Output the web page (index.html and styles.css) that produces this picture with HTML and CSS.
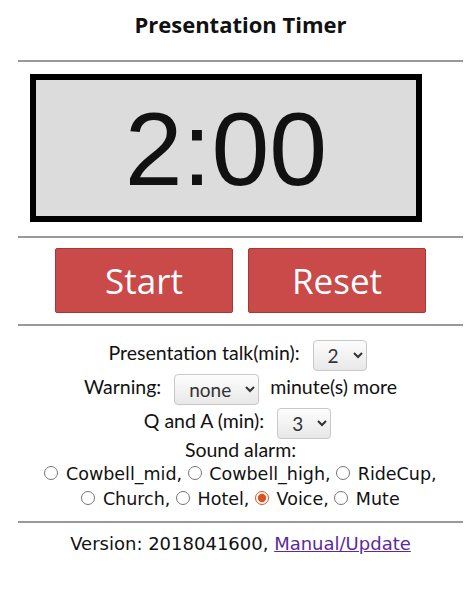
FILE: index.html
```html
<html>
<head>
<title>Presentation Timer</title>
<link rel="stylesheet" href="styles.css">
</head>
<body>
<div class="page">
<h1 class="title">Presentation Timer</h1>
<hr>
<div class="clock">2:00</div>
<hr>
<div class="buttons">
<a href="#" class="btn">Start</a>
<a href="#" class="btn">Reset</a>
</div>
<hr>
<form class="settings" name="setting">
<p class="row">Presentation talk(min):
<select name="talk"><option>1</option><option selected>2</option><option>3</option><option>5</option></select></p>
<p class="row">Warning:
<select name="warn"><option selected>none</option><option>1</option><option>2</option></select>
minute(s) more</p>
<p class="row">Q and A (min):
<select name="qa"><option>2</option><option selected>3</option><option>5</option></select></p>
<p class="label">Sound alarm:</p>
<p class="sounds">
<label><input type="radio" name="snd"> Cowbell_mid,</label>
<label><input type="radio" name="snd"> Cowbell_high,</label>
<label><input type="radio" name="snd"> RideCup,</label><br>
<label><input type="radio" name="snd"> Church,</label>
<label><input type="radio" name="snd"> Hotel,</label>
<label><input type="radio" name="snd" checked> Voice,</label>
<label><input type="radio" name="snd"> Mute</label>
</p>
</form>
<hr>
<p class="version">Version: 2018041600, <a href="#">Manual/Update</a></p>
</div>
</body>
</html>
```

FILE: styles.css
```css
body{margin:0;
color:#111;
text-align:center;}
.page{width:445px;
margin-left:18px;}
.title{font-family:"Open Sans",sans-serif;
font-size:22px;
font-weight:700;
margin:0;
padding-top:9px;
height:43px;}
hr{border:none;
border-top:2px solid #999;
margin:8px 0 0 0;}
.clock{width:380px;
height:136px;
margin:12px 0 14px 12px;
background:#dcdcdc;
border:6px solid #000;
font-family:"Liberation Sans",Arial,sans-serif;
font-size:104px;
line-height:138px;}
.buttons{display:flex;
justify-content:flex-end;
gap:15px;
padding:10px 37px 3px 0;}
.btn{display:block;
width:176px;
height:63px;
line-height:64px;
background:#c94a48;
border:1px solid #a43836;
border-radius:2px;
color:#fff;
font-family:"Open Sans",sans-serif;
font-size:35px;
text-decoration:none;}
.settings{margin:0;
padding-top:10px;
font-family:Lato,sans-serif;
font-size:19.5px;}
.row{margin:0;
height:34px;
line-height:34px;}
select{font-family:Lato,sans-serif;
font-size:19px;
color:#333;
height:31px;
padding:0 10px;
margin-left:8px;
margin-right:6px;
vertical-align:middle;
border:1px solid #c8c8c8;
border-radius:4px;
background:linear-gradient(#fdfdfd,#e8e8e8);}
.label{margin:0;
line-height:24px;}
.sounds{margin:0 0 9px 0;
font-family:"DejaVu Sans",sans-serif;
font-size:17.5px;
line-height:25px;}
input[type=radio]{width:14px;
height:14px;
margin:0 2px 0 0;
accent-color:#d9541e;}
.version{margin:10px 0 0 0;
font-family:"DejaVu Sans",sans-serif;
font-size:18px;
line-height:22px;}
.version a{color:#5b2aa0;}
```
